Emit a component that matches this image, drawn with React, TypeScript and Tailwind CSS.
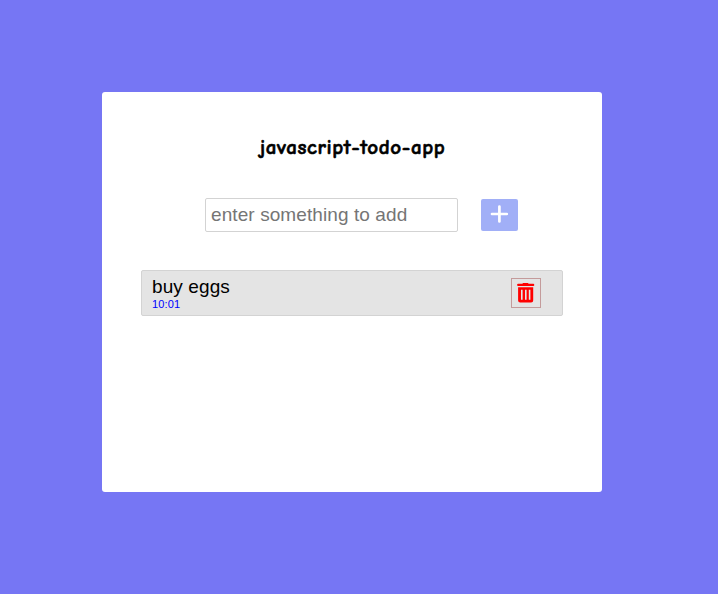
function PlusIcon() {
  return (
    <svg width="37" height="32" viewBox="0 0 37 32" aria-hidden="true">
      <path d="M18.4 7.6V22.4M11 15H25.8" stroke="currentColor" strokeWidth="2.7" strokeLinecap="round" fill="none" />
    </svg>
  );
}

function TrashIcon() {
  return (
    <svg width="28" height="28" viewBox="-0.5 0.2 28 28" aria-hidden="true">
      <path
        fill="currentColor"
        fillRule="evenodd"
        d="M5.6 5H9.8L10.6 4.2H15.4L16.2 5H20.7Q21.8 5 21.8 6.2Q21.8 7.3 20.7 7.3H5.6Q4.6 7.3 4.6 6.2Q4.6 5 5.6 5ZM5.6 8.5H20.7V21.6Q20.7 23.7 18.6 23.7H7.7Q5.6 23.7 5.6 21.6ZM8.5 11V20.9H10.1V11ZM12.5 11V20.9H14.1V11ZM16.3 11V20.9H17.9V11Z"
      />
    </svg>
  );
}

export default function App() {
  return (
    <main className="h-[594px] w-[718px] overflow-hidden bg-[#7676f4] pt-[92px] pl-[102px] font-['Liberation_Sans',Arial,sans-serif]">
      <section className="flex h-[400px] w-[500px] flex-col rounded-[3px] bg-white px-[39px] pt-[40px]">
        <h1 className="flex h-[30px] items-center justify-center whitespace-nowrap pl-px font-['Comic_Neue','Lato',sans-serif] text-[21px] font-bold leading-[30px] tracking-[0.6px] text-black [-webkit-text-stroke:0.6px_black]">
          javascript-todo-app
        </h1>
        <form className="mt-[36px] ml-[64px] flex items-center gap-[23px]" onSubmit={(e) => e.preventDefault()}>
          <input
            type="text"
            placeholder="enter something to add"
            className="h-[34px] w-[253px] rounded-[2px] border border-[#d3d3d3] px-[5px] text-[19px] tracking-[0.09px] text-black outline-none placeholder:text-[#757575]"
          />
          <button type="button" aria-label="Add" className="flex h-[32px] w-[37px] items-center justify-center rounded-[2px] bg-[#a1aff7] text-white">
            <PlusIcon />
          </button>
        </form>
        <ul className="mt-[38px]">
          <li className="flex h-[46px] items-center justify-between rounded-[2px] border border-[#d3d3d3] bg-[#e4e4e4] pr-[21px] pl-[10px]">
            <div className="pt-[2px]">
              <p className="text-[19px] leading-[20px] tracking-[0.1px] text-black">buy eggs</p>
              <p className="text-[11px] leading-[14px] tracking-[0.15px] text-[#0000ff]">10:01</p>
            </div>
            <button type="button" aria-label="Delete" className="flex size-[30px] items-center justify-center border border-[#c49b9b] text-[#ff0000]">
              <TrashIcon />
            </button>
          </li>
        </ul>
      </section>
    </main>
  );
}
